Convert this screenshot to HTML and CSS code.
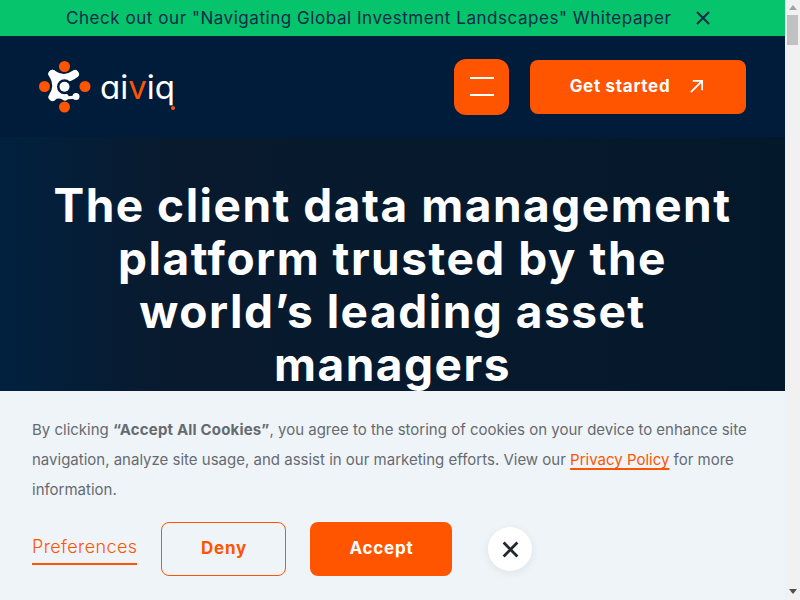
FILE: index.html
```html
<!DOCTYPE html>
<html lang="en">
<head>
<meta charset="utf-8">
<title>aiviq</title>
<link rel="stylesheet" href="styles.css">
</head>
<body>
<div class="viewport">
<div class="page">
<div class="promo">
  <a class="promo-text">Check out our "Navigating Global Investment Landscapes" Whitepaper</a>
  <svg class="promo-close" width="16" height="16" viewBox="0 0 16 16"><path d="M2 2l12 12M14 2L2 14" fill="none" stroke="#0c2a4a" stroke-width="2"/></svg>
</div>
<header class="topbar">
  <a class="logo">
    <svg class="logo-mark" width="52" height="52" viewBox="0 0 52 52">
      <circle cx="25.500" cy="5.500" r="5.500" fill="#ff5500"/>
      <circle cx="25.500" cy="46" r="5.500" fill="#ff5500"/>
      <circle cx="5.500" cy="25.500" r="5.500" fill="#ff5500"/>
      <circle cx="46" cy="25.500" r="5.500" fill="#ff5500"/>
      <path d="M13.500 13Q25 21 36 13" fill="none" stroke="#fff" stroke-width="8" stroke-linecap="round"/>
      <path d="M13.500 13Q21 25 13.500 36" fill="none" stroke="#fff" stroke-width="8" stroke-linecap="round"/>
      <path d="M13.500 36Q20 32 26 36" fill="none" stroke="#fff" stroke-width="7" stroke-linecap="round"/>
      <circle cx="25.500" cy="25.700" r="7.500" fill="#001c3b"/>
      <circle cx="25.500" cy="25.700" r="5" fill="#fff"/>
      <path d="M27 37L37 36" fill="none" stroke="#fff" stroke-width="3" stroke-linecap="round"/>
      <circle cx="37" cy="35.500" r="3.500" fill="#fff"/>
    </svg>
    <span class="wordmark">ai<span class="wordmark-v">v</span>iq<i class="wordmark-dot"></i></span>
  </a>
  <div class="topbar-actions">
    <button class="menu-btn" aria-label="Menu"><span class="menu-line"></span><span class="menu-line"></span></button>
    <a class="cta"><span class="cta-label">Get started</span>
      <svg width="15" height="15" viewBox="0 0 16 16"><path d="M2 14L14 2M4 2h10v10" fill="none" stroke="#fff" stroke-width="1.900"/></svg>
    </a>
  </div>
</header>
<main class="hero">
  <h1 class="hero-title">The client data management platform trusted by the world’s leading asset managers</h1>
</main>
<div class="cookie">
  <p class="cookie-text">By clicking <b>“Accept All Cookies”</b>, you agree to the storing of cookies on your device to enhance site navigation, analyze site usage, and assist in our marketing efforts. View our <a class="cookie-link">Privacy Policy</a> for more information.</p>
  <div class="cookie-actions">
    <a class="prefs">Preferences</a>
    <button class="btn btn-deny">Deny</button>
    <button class="btn btn-accept">Accept</button>
    <button class="cookie-close" aria-label="Close"><svg width="17" height="17" viewBox="0 0 16 16"><path d="M1.500 1.500l13 13M14.500 1.500l-13 13" fill="none" stroke="#22282e" stroke-width="2.600"/></svg></button>
  </div>
</div>
</div>
<div class="scrollbar">
  <span class="scroll-up"></span>
  <span class="scroll-thumb"></span>
  <span class="scroll-down"></span>
</div>
</div>
</body>
</html>
```
FILE: styles.css
```css
* { box-sizing: border-box; }
body {
  margin: 0;
  font-family: Inter, "Liberation Sans", sans-serif;
  background: #fff;
}
.viewport {
  display: flex;
  height: 600px;
  overflow: hidden;
}
.page {
  position: relative;
  flex: 1;
  min-width: 0;
  display: flex;
  flex-direction: column;
}
.scrollbar {
  position: relative;
  flex: none;
  width: 15px;
  background: #f1f1f1;
  display: flex;
  flex-direction: column;
  align-items: center;
  justify-content: space-between;
}
.scroll-up {
  margin-top: 5px;
  border: 4px solid transparent;
  border-top: 0;
  border-bottom: 5px solid #a3a3a3;
}
.scroll-thumb {
  position: absolute;
  top: 15px;
  left: 2px;
  width: 11px;
  height: 30px;
  background: #c1c1c1;
}
.scroll-down {
  margin-bottom: 6px;
  border: 4px solid transparent;
  border-bottom: 0;
  border-top: 5px solid #505050;
}
.promo {
  height: 36px;
  flex: none;
  background: #05c46b;
  display: flex;
  align-items: center;
  padding-left: 66px;
  color: #0c2a4a;
}
.promo-text { font-size: 17px; letter-spacing: 0.55px; white-space: nowrap; }
.promo-close { margin-left: 24px; flex: none; }
.topbar {
  height: 101px;
  flex: none;
  background: #001c3b;
  display: flex;
  align-items: center;
  justify-content: space-between;
  padding: 0 39px;
}
.logo { display: flex; align-items: center; gap: 9px; }
.logo-mark { display: block; }
.wordmark {
  position: relative;
  font-size: 33px;
  font-weight: 400;
  font-feature-settings: "cv11";
  line-height: 36px;
  color: #fff;
}
.wordmark-v { color: #ff5500; }
.wordmark-dot {
  position: absolute;
  right: 0;
  bottom: -5px;
  width: 4px;
  height: 4px;
  border-radius: 50%;
  background: #ff5500;
}
.topbar-actions { display: flex; align-items: center; gap: 21px; }
.menu-btn {
  width: 55px;
  height: 56px;
  border: 0;
  border-radius: 12px;
  background: #ff5500;
  display: flex;
  flex-direction: column;
  align-items: center;
  justify-content: center;
  gap: 15px;
  padding: 0;
}
.menu-line { display: block; width: 24px; height: 2px; background: #fff; }
.cta {
  width: 216px;
  height: 54px;
  border-radius: 8px;
  background: #ff5500;
  color: #fff;
  font-size: 17px;
  letter-spacing: 0.7px;
  font-weight: 700;
  display: flex;
  align-items: center;
  justify-content: center;
  gap: 19px;
  padding-right: 2px;
}
.cta-label { padding-bottom: 2px; }
.hero {
  flex: 1;
  padding: 42px 39px 0;
  background: linear-gradient(90deg, #01213f 0, #091a2e 170px, #04182c 100%);
}
.hero-title {
  margin: 0 auto;
  width: 690px;
  font-size: 46px;
  letter-spacing: 1.5px;
  line-height: 53px;
  font-weight: 700;
  color: #fff;
  text-align: center;
}
.cookie {
  position: absolute;
  left: 0;
  right: 0;
  bottom: 0;
  height: 209px;
  padding: 24px 32px 0;
  background: #eff4f9;
}
.cookie-text {
  margin: 0;
  font-size: 15px;
  line-height: 30px;
  color: #666b70;
}
.cookie-text b { font-weight: 700; letter-spacing: 0.17px; }
.cookie-link {
  color: #ff5500;
  text-decoration: underline;
  text-decoration-thickness: 2px;
  text-underline-offset: 3px;
}
.cookie-actions { display: flex; align-items: center; margin-top: 17px; }
.prefs {
  color: #ff5500;
  font-size: 18px;
  letter-spacing: 0.4px;
  font-weight: 300;
  line-height: 24px;
  padding-top: 1px;
  padding-bottom: 4px;
  border-bottom: 2px solid #ff5500;
  margin-right: 24px;
}
.btn {
  height: 54px;
  border-radius: 8px;
  font-family: inherit;
  font-size: 17px;
  letter-spacing: 0.8px;
  font-weight: 700;
  padding: 0 0 2px;
}
.btn-deny {
  width: 125px;
  background: transparent;
  border: 1px solid #ff5500;
  color: #ff5500;
  margin-right: 24px;
}
.btn-accept {
  width: 142px;
  background: #ff5500;
  border: 0;
  color: #fff;
  margin-right: 36px;
}
.cookie-close {
  width: 44px;
  height: 44px;
  border: 0;
  border-radius: 50%;
  background: #fff;
  box-shadow: 0 2px 8px rgba(0, 0, 0, 0.08);
  display: flex;
  align-items: center;
  justify-content: center;
  padding: 0;
}
```
